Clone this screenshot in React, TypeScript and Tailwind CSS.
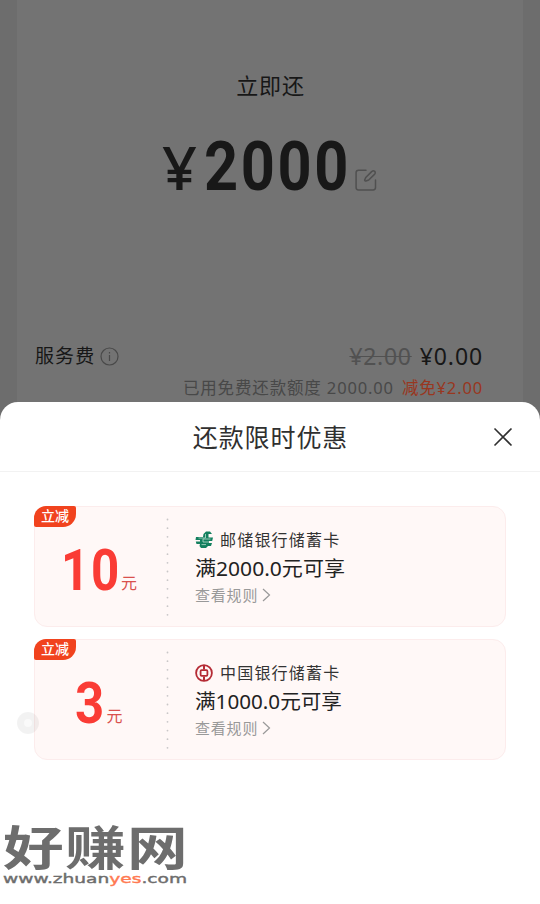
import type { ReactNode } from 'react';

interface FittedTextProps {
  text: string;
  width: number;
  height: number;
  size: number;
  spacing?: number;
  className?: string;
}

// Single line of text stretched to a fixed width, sitting on the bottom edge
function FittedText({ text, width, height, size, spacing, className }: FittedTextProps) {
  return (
    <svg width={width} height={height} className={`overflow-visible flex-shrink-0 ${className ?? ''}`}>
      <text
        x={0}
        y={height}
        fontSize={size}
        letterSpacing={spacing}
        textLength={width}
        lengthAdjust="spacingAndGlyphs"
        fill="currentColor"
      >
        {text}
      </text>
    </svg>
  );
}

function EditIcon() {
  return (
    <svg width="22" height="22" viewBox="0 0 22 22" fill="none" stroke="#505050" strokeWidth="1.5" strokeLinecap="round">
      <path d="M11 1.2H3.5A2.4 2.4 0 0 0 1.1 3.6v14.9a2.4 2.4 0 0 0 2.4 2.4h14.6a2.4 2.4 0 0 0 2.4-2.4V11" />
      <path d="m11 8.2 5.9-5.8a1.9 1.9 0 0 1 2.8 2.7l-6 5.9-2.8 1a1 1 0 0 1-1.2-1.2z" strokeLinejoin="round" />
    </svg>
  );
}

function InfoIcon() {
  return (
    <svg width="19" height="19" viewBox="0 0 19 19" fill="none" stroke="#494949" strokeWidth="1.2">
      <circle cx="9.5" cy="9.5" r="8.5" />
      <path d="M9.5 8v6M9.5 5v1.5" />
    </svg>
  );
}

function PostalBankIcon() {
  return (
    <svg width="18" height="18" viewBox="0 0 18 18" fill="none">
      <path d="M8.5 3 11 .5h4L17 3h-3.5v3.5H18l-.8 3.5H14v2h3l-1 3h-3l-2 2H6l-1.5-2 .5-2H1.5l-.7-2.5H5V9H.5L1 6h7z" fill="#14805f" />
      <path d="M10.5 3v4H3.5M15.5 8H8v3h6M6.5 13.6h4.5" stroke="#b9dccd" strokeWidth=".8" />
    </svg>
  );
}

function BankOfChinaIcon() {
  return (
    <svg width="18" height="18" viewBox="0 0 18 18" fill="none" stroke="#b52b35">
      <circle cx="9" cy="9" r="7.9" strokeWidth="1.8" />
      <path d="M9 1.5v4M9 12.5v4" strokeWidth="2" />
      <rect x="5.6" y="6.2" width="6.8" height="5.6" rx="1" strokeWidth="1.8" />
    </svg>
  );
}

interface CouponProps {
  amount: string;
  amountWidth: number;
  bank: string;
  condition: string;
  conditionWidth: number;
  icon: ReactNode;
}

function Coupon({ amount, amountWidth, bank, condition, conditionWidth, icon }: CouponProps) {
  return (
    <div className="relative flex h-[121px] rounded-[13px] border border-[#fcecec] bg-[#fff8f7]">
      <span className="absolute -left-px -top-px flex h-[21px] w-[42px] items-center justify-center rounded-tl-[12px] rounded-br-[13px] rounded-tr-[2px] rounded-bl-[2px] bg-[#f1431e] pb-[2px] text-[14px] font-medium text-white">
        立减
      </span>
      <div className="flex w-[131px] items-end justify-center pb-[36px] pr-[3px]">
        <FittedText
          text={amount}
          width={amountWidth}
          height={41}
          size={57}
          spacing={2}
          className="font-[Roboto] font-bold text-[#fa3c35]"
        />
        <span className="-mb-[3px] text-[16px] leading-[20px] text-[#d9514d]">元</span>
      </div>
      <svg width="3" height="101" className="mt-[11px]">
        <path d="M1.5 1.5v98" stroke="#c9c7c8" strokeWidth="1.8" strokeLinecap="round" strokeDasharray="0 8.67" />
      </svg>
      <div className="pl-[26px] pt-[24px]">
        <div className="flex h-[18px] items-center gap-[7px]">
          {icon}
          <span className="text-[16px] tracking-[1.2px] text-[#333]">{bank}</span>
        </div>
        <FittedText
          text={condition}
          width={conditionWidth}
          height={27}
          size={20}
          className="text-[#222]"
        />
        <div className="mt-[9px] flex h-[20px] items-center text-[15px] tracking-[0.8px] text-[#999]">
          查看规则
          <svg width="9" height="14" viewBox="0 0 9 14" fill="none" stroke="#999" strokeWidth="1.2" className="ml-[4px]">
            <path d="m1 1 6.5 6L1 13" />
          </svg>
        </div>
      </div>
    </div>
  );
}

function RepayPage() {
  return (
    <div className="h-[420px] bg-[#6d6d6d] pl-[17px] pr-[17px]">
      <div className="h-full bg-[#737373] pl-[18px] pr-[40px] pt-[69px]">
        <h1 className="pl-[23px] text-center text-[22px] leading-[32px] tracking-[0.8px] text-[#171717]">立即还</h1>
        <div className="flex items-end pl-[127px] pt-[39px] text-[#181818]">
          <FittedText text="¥" width={35} height={43} size={60} className="font-['Noto_Sans'] font-medium" />
          <FittedText text="2000" width={147} height={50} size={68} spacing={3} className="ml-[7px] font-[Roboto] font-bold" />
          <span className="ml-[4px] translate-y-px">
            <EditIcon />
          </span>
        </div>
        <div className="mt-[152px] flex h-[28px] items-center">
          <span className="text-[19px] tracking-[1.1px] text-[#171717]">服务费</span>
          <span className="ml-[5px]">
            <InfoIcon />
          </span>
          <span className="ml-auto text-[23px] tracking-[0.7px] text-[#515151] line-through decoration-1">¥2.00</span>
          <span className="ml-[8px] text-[23px] tracking-[0.9px] text-[#171717]">¥0.00</span>
        </div>
        <div className="mt-[6px] flex h-[24px] items-center justify-end text-[16.5px] tracking-[0.85px] text-[#484848]">
          <span>已用免费还款额度 2000.00</span>
          <span className="ml-[8px] text-[#99371f]">减免¥2.00</span>
        </div>
      </div>
    </div>
  );
}

function Watermark() {
  return (
    <div className="w-[184px] text-[#6d6d6d]">
      <FittedText
        text="好赚网"
        width={186}
        height={40}
        size={47}
        spacing={1}
        className="font-['Noto_Sans_CJK_SC'] font-bold"
      />
      <svg width="184" height="20" className="block overflow-visible font-['DejaVu_Sans']">
        <text
          x="0"
          y="18"
          fontSize="13"
          textLength="184"
          lengthAdjust="spacingAndGlyphs"
          fill="#6d6d6d"
          stroke="#6d6d6d"
          strokeWidth=".4"
        >
          www.zhuan<tspan fill="#ff7a52" stroke="#ff7a52">yes</tspan>.com
        </text>
      </svg>
    </div>
  );
}

export default function App() {
  return (
    <div className="relative h-[904px] w-[540px] overflow-hidden bg-white font-['Noto_Sans','Noto_Sans_CJK_SC',sans-serif]">
      <RepayPage />
      <section className="relative -mt-[18px] h-[502px] rounded-t-[18px] bg-white">
        <header className="flex h-[70px] items-center border-b border-[#f2f2f2]">
          <h2 className="flex-1 pl-[48px] pt-[2px] text-center text-[25px] tracking-[0.9px] text-[#303030]">还款限时优惠</h2>
          <button className="mr-[27px] pt-[1px]" aria-label="关闭">
            <svg width="20" height="20" viewBox="0 0 20 20" fill="none" stroke="#303030" strokeWidth="1.6">
              <path d="m1.5 1.5 17 17M18.5 1.5l-17 17" />
            </svg>
          </button>
        </header>
        <div className="flex flex-col gap-[12px] px-[34px] pt-[34px]">
          <Coupon
            amount="10"
            amountWidth={60}
            bank="邮储银行储蓄卡"
            condition="满2000.0元可享"
            conditionWidth={150}
            icon={<PostalBankIcon />}
          />
          <Coupon
            amount="3"
            amountWidth={31}
            bank="中国银行储蓄卡"
            condition="满1000.0元可享"
            conditionWidth={147}
            icon={<BankOfChinaIcon />}
          />
        </div>
        <div className="pl-[3px] pt-[65px]">
          <Watermark />
        </div>
      </section>
      {/* floating assist button */}
      <div className="absolute left-[17px] top-[712px] flex h-[22px] w-[22px] items-center justify-center rounded-full bg-black/5">
        <div className="h-[8px] w-[8px] rounded-full bg-white/60"></div>
      </div>
    </div>
  );
}
